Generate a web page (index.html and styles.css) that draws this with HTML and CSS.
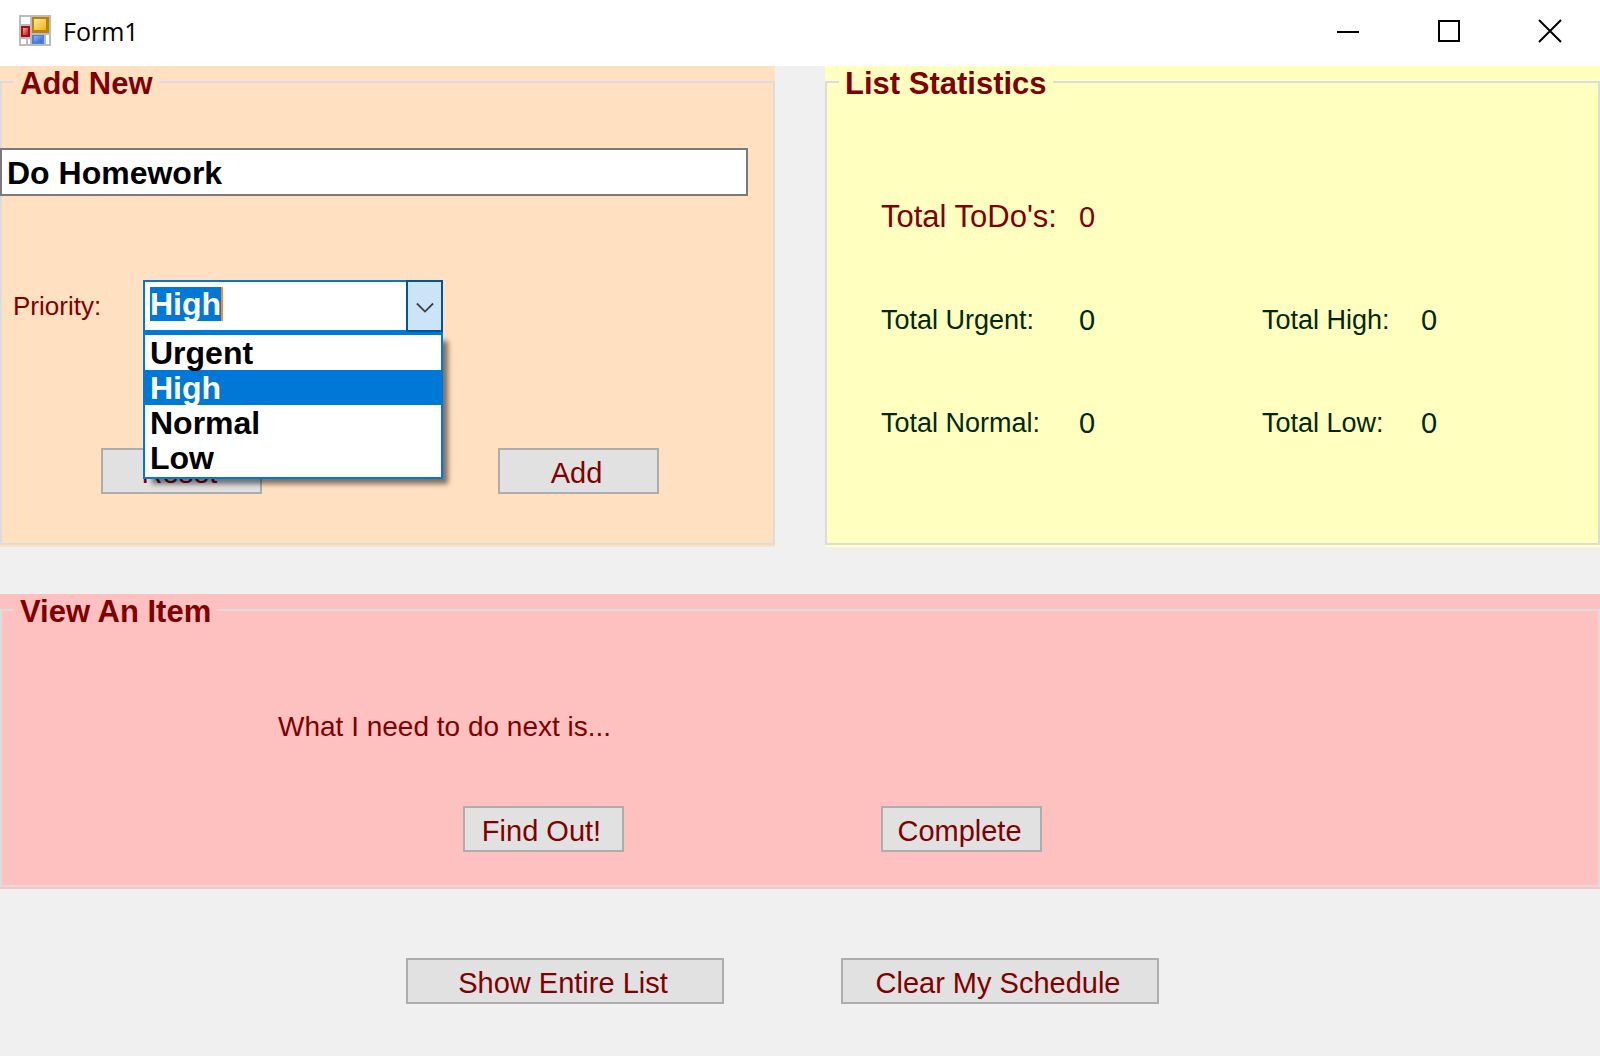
FILE: index.html
```html
<!DOCTYPE html>
<html lang="en">
<head>
<meta charset="utf-8">
<title>Form1</title>
<link rel="stylesheet" href="styles.css">
</head>
<body>
<header class="titlebar">
  <svg class="app-icon" viewBox="0 0 32 32" aria-hidden="true">
    <defs>
      <linearGradient id="gold" x1="0" y1="0" x2="1" y2="1"><stop offset="0" stop-color="#ffe9a0"/><stop offset="1" stop-color="#f2b40a"/></linearGradient>
      <linearGradient id="blue" x1="0" y1="0" x2="1" y2="1"><stop offset="0" stop-color="#8ab8fb"/><stop offset="1" stop-color="#3465cf"/></linearGradient>
      <linearGradient id="red" x1="0" y1="0" x2="1" y2="1"><stop offset="0" stop-color="#f7a8a8"/><stop offset="1" stop-color="#c81414"/></linearGradient>
    </defs>
    <rect width="32" height="31" fill="#bcbcbc"/>
    <path fill="#fff" d="M2 2h9v7H2zM2 24h5v5H2zM9 24h2v5H9zM27 20h3v9h-3z"/>
    <rect x="2" y="11" width="9" height="11" fill="#a80d12"/>
    <rect x="4" y="13" width="5" height="7" fill="url(#red)"/>
    <rect x="13" y="2" width="17" height="16" fill="#b88408"/>
    <rect x="15" y="4" width="12" height="11" fill="url(#gold)"/>
    <rect x="13" y="20" width="12" height="9" fill="#4a7fe0"/>
    <rect x="15" y="21" width="8" height="6" fill="url(#blue)"/>
  </svg>
  <h1 class="title">Form1</h1>
  <button class="caption" type="button" aria-label="Minimize"><svg viewBox="0 0 24 24"><path d="M1 13h22"/></svg></button>
  <button class="caption" type="button" aria-label="Maximize"><svg viewBox="0 0 24 24"><path d="M2 2h20v20H2z"/></svg></button>
  <button class="caption" type="button" aria-label="Close"><svg viewBox="0 0 24 24"><path d="M1 1l22 22M23 1L1 23"/></svg></button>
</header>
<main>
  <div class="top">
    <section class="panel peach">
      <fieldset class="group">
        <legend>Add New</legend>
        <input class="todo" type="text" value="Do Homework" aria-label="New item">
        <div class="priority">
          <label for="priority">Priority:</label>
          <div class="combo">
            <input id="priority" type="text" value="High" role="combobox" aria-expanded="true" aria-controls="levels">
            <button class="arrow" type="button" aria-label="Open list"><svg viewBox="0 0 20 12"><path d="M1 1l9 9 9-9"/></svg></button>
            <select class="levels" id="levels" size="4" aria-label="Priority levels">
              <option>Urgent</option>
              <option class="current">High</option>
              <option>Normal</option>
              <option>Low</option>
            </select>
          </div>
        </div>
        <div class="add-actions">
          <button class="btn" type="button">Reset</button>
          <button class="btn" type="button">Add</button>
        </div>
      </fieldset>
    </section>
    <section class="panel yellow">
      <fieldset class="group">
        <legend>List Statistics</legend>
        <dl class="stats">
          <dt class="total">Total ToDo's:</dt><dd class="wide">0</dd>
          <dt>Total Urgent:</dt><dd>0</dd><dt>Total High:</dt><dd>0</dd>
          <dt>Total Normal:</dt><dd>0</dd><dt>Total Low:</dt><dd>0</dd>
        </dl>
      </fieldset>
    </section>
  </div>
  <section class="panel pink">
    <fieldset class="group">
      <legend>View An Item</legend>
      <p class="next">What I need to do next is...</p>
      <div class="view-actions">
        <button class="btn" type="button">Find Out!</button>
        <button class="btn" type="button">Complete</button>
      </div>
    </fieldset>
  </section>
  <div class="list-actions">
    <button class="btn long" type="button">Show Entire List</button>
    <button class="btn long" type="button">Clear My Schedule</button>
  </div>
</main>
</body>
</html>
```
FILE: styles.css
```css
* { box-sizing: border-box; }

body {
  margin: 0;
  min-height: 100vh;
  background: #f0f0f0;
  color: #800000;
  font-family: "Liberation Sans", Arial, sans-serif;
  font-size: 29px;
  line-height: 34px;
}

button, input, select { font: inherit; color: inherit; }

/* Title bar */
.titlebar {
  display: flex;
  align-items: center;
  height: 66px;
  padding-bottom: 4px;
  padding-left: 19px;
  background: #fff;
}
.app-icon { width: 32px; height: 32px; }
.title {
  flex: 1;
  margin: 0 0 0 12px;
  color: #000;
  font: 25px/34px "Open Sans", "Noto Sans", sans-serif;
}
.caption {
  width: 101px;
  height: 62px;
  padding: 0;
  border: 0;
  background: none;
}
.caption svg {
  display: block;
  width: 24px;
  height: 24px;
  margin: 0 auto;
  fill: none;
  stroke: #000;
  stroke-width: 2;
}

/* Group boxes */
.top {
  display: grid;
  grid-template-columns: 1fr 1fr;
  gap: 50px;
  margin-bottom: 47px;
}
.panel { display: flex; padding-bottom: 2px; }
.peach { background: #ffe0c0; }
.yellow { background: #ffffc0; }
.pink { background: #ffc0c0; }
.group {
  flex: 1;
  min-width: 0;
  margin: 0;
  padding: 0;
  border: 2px solid #dcdcdc;
}
legend {
  margin-left: 12px;
  padding: 4px 6px 0;
  font-size: 31px;
  font-weight: bold;
  line-height: 28px;
}

/* Add New */
.todo {
  display: block;
  width: calc(100% - 23px);
  height: 48px;
  margin: 50px 0 0 -2px;
  padding: 2px 5px 0;
  border: 2px solid #7a7a7a;
  background: #fff;
  color: #000;
  font-size: 32px;
  font-weight: bold;
}
.priority {
  display: flex;
  align-items: center;
  margin-top: 84px;
  padding-left: 11px;
}
.priority label { width: 130px; font-size: 26px; }
.combo {
  position: relative;
  display: flex;
  width: 300px;
  height: 52px;
  font-size: 32px;
  font-weight: bold;
}
.combo input {
  flex: 1;
  min-width: 0;
  padding: 5px 5px 9px;
  border: 2px solid #0078d7;
  border-right: 0;
  background:
    linear-gradient(#ff8728, #ff8728) 71px 0 / 2px 34px no-repeat content-box content-box,
    linear-gradient(#0078d7, #0078d7) 0 0 / 71px 34px no-repeat content-box content-box,
    #fff;
  color: #fff;
}
.arrow {
  width: 37px;
  padding: 4px 0 0;
  border: 2px solid #00549a;
  background: #cce4f7;
}
.arrow svg {
  display: block;
  width: 18px;
  height: 12px;
  margin: 0 auto;
  fill: none;
  stroke: #404040;
  stroke-width: 2;
}
.levels {
  position: absolute;
  top: 100%;
  left: 0;
  z-index: 1;
  width: 100%;
  height: 147px;
  padding: 0;
  overflow: hidden;
  border: 2px solid #0078d7;
  border-top-width: 3px;
  border-radius: 0;
  outline: 0;
  background: #fff;
  color: #000;
  box-shadow: 7px 7px 5px -2px rgba(0, 0, 0, 0.5);
}
.levels option {
  height: 35px;
  min-height: 0;
  padding: 0 5px;
  font-weight: bold;
  line-height: 36px;
}
.levels .current { background: #0078d7; color: #fff; }

.btn {
  width: 161px;
  height: 46px;
  padding: 3px 4px 0 0;
  border: 2px solid #adadad;
  background: #e1e1e1;
}
.long { width: 318px; }
.add-actions {
  display: flex;
  gap: 236px;
  margin: 116px 0 49px;
  padding-left: 99px;
}

/* List Statistics */
.stats {
  display: grid;
  grid-template-columns: 198px 183px 159px auto;
  row-gap: 69px;
  margin: 102px 0 0;
  padding-left: 54px;
  color: #002800;
}
.stats dt { font-size: 27px; }
.stats dd { margin: 0; }
.stats .total { font-size: 31px; }
.stats .total, .stats .wide { color: #800000; }
.stats .wide { grid-column: 2 / -1; }

/* View An Item */
.next { margin: 84px 0 62px; padding-left: 276px; font-size: 28px; }
.view-actions {
  display: flex;
  gap: 257px;
  margin-bottom: 33px;
  padding-left: 461px;
}

.list-actions {
  display: flex;
  gap: 117px;
  padding: 69px 0 52px 406px;
}
```
